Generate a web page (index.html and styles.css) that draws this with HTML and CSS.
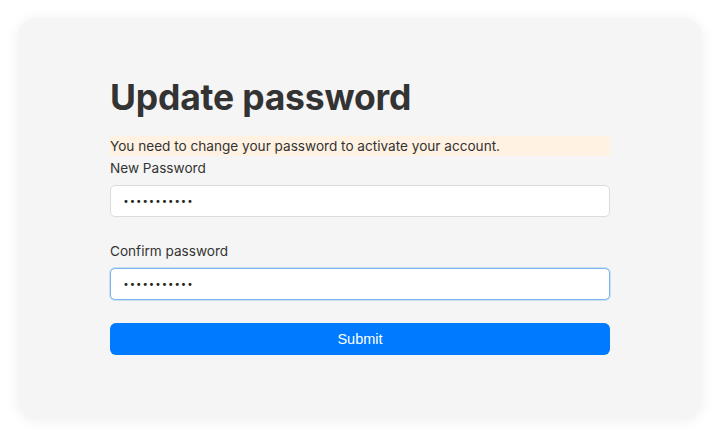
FILE: index.html
```html
<!DOCTYPE html>
<html lang="en">
<head>
    <meta charset="UTF-8">
    <meta name="viewport" content="width=device-width, initial-scale=1.0">
    <title>Update password</title>
    <link rel="stylesheet" href="styles.css">
</head>
<body>
    <div class="card">
        <form class="form">
            <h1>Update password</h1>

            <p class="notice">You need to change your password to activate your account.</p>

            <label for="newPassword">New Password</label>
            <input type="password" id="newPassword" value="12345678901">

            <label for="confirmPassword" class="spaced">Confirm password</label>
            <input type="password" id="confirmPassword" class="focused" value="12345678901">

            <button type="button">Submit</button>
        </form>
    </div>
</body>
</html>
```

FILE: styles.css
```css
:root {
    --page-bg: #ffffff;
    --card-bg: #f5f5f5;
    --text-color: #333;
    --notice-bg: #fff2e2;
    --input-border: #dcdcdc;
    --focus-border: #7cb6ec;
    --button-bg: #007bff;
}

* {
    box-sizing: border-box;
}

body {
    margin: 0;
    padding: 18px;
    background-color: var(--page-bg);
    font-family: Inter, "Noto Sans", sans-serif;
    color: var(--text-color);
}

.card {
    height: 400px;
    background: var(--card-bg);
    border-radius: 18px;
    box-shadow: 0 2px 14px rgba(0,0,0,0.07);
    padding-top: 56px;
}

.form {
    width: 500px;
    margin: 0 auto;
    display: flex;
    flex-direction: column;
}

h1 {
    margin: 0 0 14px;
    font-size: 35.5px;
    line-height: 48px;
    font-weight: 700;
    letter-spacing: -0.2px;
    color: var(--text-color);
}

.notice {
    margin: 0;
    background-color: var(--notice-bg);
    font-size: 13.6px;
    line-height: 20px;
}

label {
    display: block;
    margin-top: 2px;
    font-size: 13.6px;
    line-height: 20px;
}

label.spaced {
    margin-top: 24px;
}

input[type="password"] {
    width: 100%;
    height: 32px;
    margin-top: 7px;
    padding: 0 12px;
    border: 1px solid var(--input-border);
    border-radius: 5px;
    background-color: #fff;
    font-family: "DejaVu Sans", sans-serif;
    font-size: 10px;
    letter-spacing: 0.5px;
    color: #222;
    outline: none;
}

input.focused {
    border-color: var(--focus-border);
    box-shadow: 0 0 0 1px rgba(124,182,236,0.35);
}

button {
    margin-top: 23px;
    height: 32px;
    background-color: var(--button-bg);
    color: white;
    border: none;
    border-radius: 6px;
    font-family: "Liberation Sans", Arial, sans-serif;
    font-size: 14.5px;
    cursor: pointer;
}
```
